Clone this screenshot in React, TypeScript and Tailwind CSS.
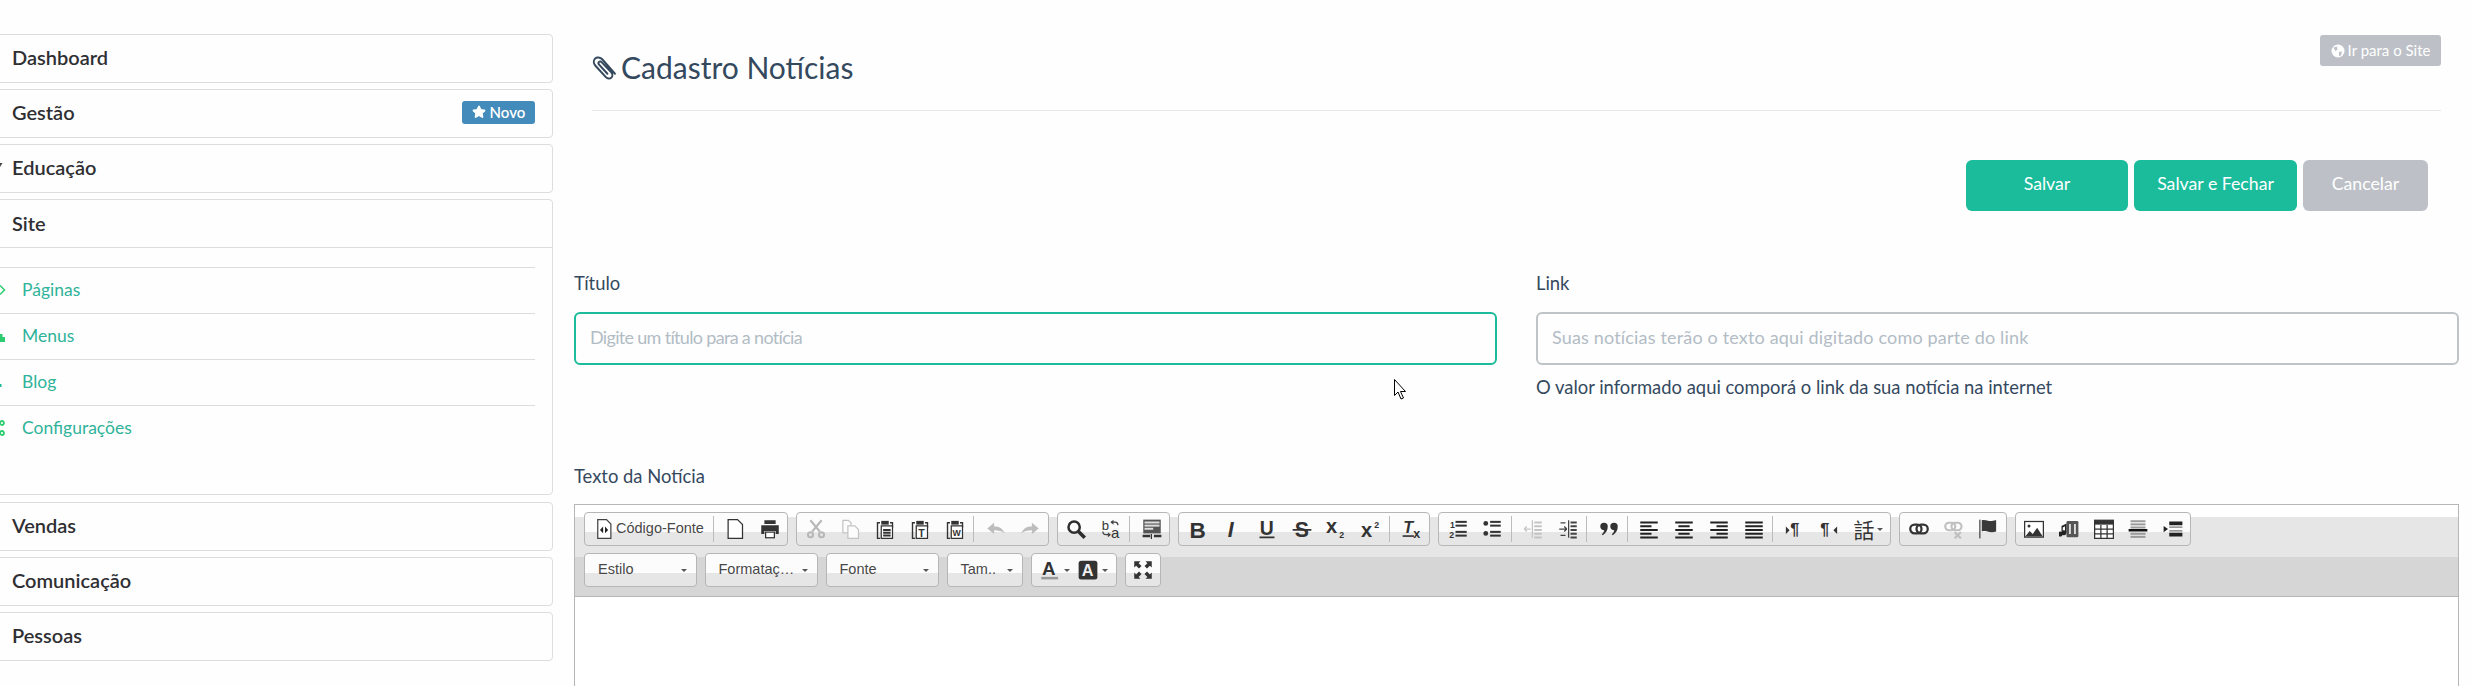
import type { ReactNode } from "react";
import { Star } from "lucide-react";

const serif = { fontFamily: "Liberation Sans, Arial, sans-serif" };

const bars = (rows: [number, number, number][], fill = "#222") =>
  rows.map(([x, y, w], i) => <rect key={i} x={x} y={y} width={w} height={1.6} fill={fill} />);

const letter = (t: string, x: number, y: number, size: number, extra: object = {}) => (
  <text x={x} y={y} fontSize={size} fill="#333" style={serif} fontWeight={700} {...extra}>
    {t}
  </text>
);

const clip = (inner: ReactNode) => (
  <>
    <path d="M4 3H2v12.5h2M12 3h2v4" fill="none" stroke="#333" strokeWidth="1.1" />
    <path d="M5 1.5h6v3H5z" fill="#333" />
    <rect x="5" y="5.5" width="9" height="10" fill="#fff" stroke="#333" />
    {inner}
  </>
);

const icons: Record<string, ReactNode> = {
  source: (
    <>
      <path d="M3 .5h7l3.500 3.500v11.500H3z" fill="#fff" stroke="#444" />
      <path d="M7.300 6 4.800 8.700l2.500 2.700zM8.800 6l2.500 2.700-2.500 2.700z" fill="#222" />
    </>
  ),
  newpage: <path d="M2.500.5H10l4 4v11H2.500z" fill="#fff" stroke="#333" />,
  print: (
    <>
      <path d="M3.500 1h9v3h-9zM1 5h14v7h-2.500V9.500h-9V12H1z" fill="#333" />
      <rect x="4.500" y="10.500" width="7" height="4.500" fill="#fff" stroke="#333" />
    </>
  ),
  cut: (
    <g stroke="#b8b8b8" fill="none" strokeWidth="1.700">
      <path d="M3.500 1l7.500 9M12.500 1 5 10" />
      <circle cx="3.600" cy="12.600" r="2" />
      <circle cx="12.400" cy="12.600" r="2" />
    </g>
  ),
  copy: (
    <g stroke="#c4c4c4" fill="#fcfcfc">
      <path d="M1.500 1H6l2 2v8H1.500z" />
      <path d="M5.500 5.500H11l3 3v7H5.500z" />
    </g>
  ),
  paste: clip(<g>{bars([[6.5, 8, 6], [6.5, 10.2, 6], [6.5, 12.4, 6]], "#333")}</g>),
  pastetext: clip(letter("T", 6.6, 14, 8.5)),
  pasteword: clip(letter("W", 5.9, 13.8, 7)),
  undo: <path d="M1 7.500 6.500 3v3c4 0 7 1.500 8.500 5.500C12.500 9.500 10 9 6.500 9v3z" fill="#bdbdbd" />,
  redo: <path d="M15 7.500 9.500 3v3C5.500 6 2.500 7.500 1 11.500 3.500 9.500 6 9 9.500 9v3z" fill="#bdbdbd" />,
  search: (
    <g stroke="#2e2e2e" fill="none" strokeWidth="2">
      <circle cx="6.500" cy="6.500" r="4.500" />
      <path d="m10 10 5 5" strokeWidth="2.800" />
    </g>
  ),
  replace: (
    <>
      {letter("b", 0.5, 8.5, 10.5, { fontWeight: 400 })}
      {letter("a", 8, 15.5, 12, { fontWeight: 400 })}
      <path d="M8 2.500h3.500c1 0 2 1 2 2.500M1.500 10c0 1.500 1 2.500 2.500 2.500h3" fill="none" stroke="#444" />
      <path d="m10 .5-2.500 2 2.500 2zM5.500 10.500l2.500 2-2.500 2z" fill="#444" />
    </>
  ),
  selectall: (
    <>
      <rect x="1" y="0.500" width="14" height="11" fill="#555" />
      {bars([[2, 2, 12], [2, 4.5, 12], [2, 7, 7]], "#ddd")}
      <path d="M1 13h5v1H1zM10 13h5v1h-5zM7.500 12v4" stroke="#333" fill="#333" strokeWidth="1" />
    </>
  ),
  bold: letter("B", 2, 15, 18),
  italic: letter("I", 4.5, 14.5, 17, { fontStyle: "italic" }),
  underline: (
    <>
      {letter("U", 2.2, 12.5, 15.5)}
      <rect x="2" y="14" width="12" height="1.400" fill="#333" />
    </>
  ),
  strike: (
    <>
      {letter("S", 2.2, 14.5, 17)}
      <rect x="0.500" y="8" width="15" height="1.400" fill="#333" />
    </>
  ),
  sub: (
    <>
      {letter("x", 0, 11.5, 16)}
      {letter("2", 10.5, 15.5, 7)}
    </>
  ),
  sup: (
    <>
      {letter("x", 0, 14, 16)}
      {letter("2", 10.5, 7, 7)}
    </>
  ),
  clear: (
    <>
      {letter("T", 1, 11.5, 13, { fontStyle: "italic" })}
      <rect x="0.500" y="13" width="9" height="1.300" fill="#333" />
      {letter("x", 9, 15.5, 10)}
    </>
  ),
  ol: (
    <>
      {letter("1", 1.5, 7, 7)}
      {letter("2", 1, 15, 7)}
      {bars([[6, 1.5, 9], [6, 4.5, 9], [6, 9.5, 9], [6, 12.5, 9]], "#333")}
    </>
  ),
  ul: (
    <>
      <circle cx="3" cy="3.500" r="1.900" fill="#333" />
      <circle cx="3" cy="11.500" r="1.900" fill="#333" />
      {bars([[6.5, 1.5, 8.5], [6.5, 4.5, 8.5], [6.5, 9.5, 8.5], [6.5, 12.5, 8.5]], "#333")}
    </>
  ),
  outdent: (
    <>
      <rect x="7" y="1" width="1" height="14" fill="#c4c4c4" />
      {bars([[9, 2, 6], [9, 5, 6], [9, 8, 6], [9, 11, 6], [9, 14, 6]], "#c4c4c4")}
      <path d="M1 8h5M1 8l2-2M1 8l2 2" stroke="#c4c4c4" fill="none" />
    </>
  ),
  indent: (
    <>
      <rect x="8" y="1" width="1" height="14" fill="#444" />
      {bars([[10, 2, 5], [10, 5, 5], [10, 8, 5], [10, 11, 5], [10, 14, 5]], "#444")}
      <path d="M1 8h6M7 8 5 6M7 8l-2 2M2 3h4M2 13h4" stroke="#444" fill="none" />
    </>
  ),
  quote: (
    <path
      d="M4 3a3 3 0 0 1 3 3c0 3-1.500 5.500-4 7l-.8-.8C3.500 11 4 10 4.200 9 2.500 9 1 7.700 1 6a3 3 0 0 1 3-3zM12 3a3 3 0 0 1 3 3c0 3-1.500 5.500-4 7l-.8-.8c1.300-1.200 1.800-2.200 2-3.200-1.700 0-3.200-1.300-3.200-3a3 3 0 0 1 3-3z"
      fill="#333"
    />
  ),
  left: <g>{bars([[1, 2, 14], [1, 5, 9], [1, 8, 14], [1, 11, 9], [1, 14, 14]])}</g>,
  center: <g>{bars([[1, 2, 14], [3.5, 5, 9], [1, 8, 14], [3.5, 11, 9], [1, 14, 14]])}</g>,
  right: <g>{bars([[1, 2, 14], [6, 5, 9], [1, 8, 14], [6, 11, 9], [1, 14, 14]])}</g>,
  justify: <g>{bars([[1, 2, 14], [1, 5, 14], [1, 8, 14], [1, 11, 14], [1, 14, 14]])}</g>,
  ltr: (
    <>
      <path d="M1.500 6v6l3-3z" fill="#333" />
      {letter("¶", 5, 13, 13)}
    </>
  ),
  rtl: (
    <>
      {letter("¶", 1, 13, 13)}
      <path d="M14.500 6v6l-3-3z" fill="#333" />
    </>
  ),
  link: (
    <g fill="none" stroke="#333" strokeWidth="1.800">
      <rect x="1" y="4.500" width="9" height="7" rx="3.500" />
      <rect x="6" y="4.500" width="9" height="7" rx="3.500" />
    </g>
  ),
  unlink: (
    <g fill="none" stroke="#c0c0c0" strokeWidth="1.700">
      <rect x="1" y="3" width="8" height="6" rx="3" />
      <rect x="6" y="3" width="8" height="6" rx="3" />
      <path d="m8.500 10.500 5 5M13.500 10.500l-5 5" />
    </g>
  ),
  flag: (
    <>
      <rect x="1" y="0.500" width="1" height="15" fill="#444" />
      <path d="M3 1c3-1 5 1 8 .5 1.500-.2 2.500-.5 3.500-.5v9c-3 1-5 .5-7 0-2-.5-3-.5-4.500 0z" fill="#3a3a3a" />
    </>
  ),
  image: (
    <>
      <rect x="0.500" y="2" width="15" height="12.500" fill="#fff" stroke="#333" />
      <circle cx="4" cy="5.500" r="1.200" fill="#333" />
      <path d="M1 14l3.500-4.500 2.500 2.500 3.500-5L15 14z" fill="#333" />
    </>
  ),
  flash: (
    <>
      <rect x="6" y="1.500" width="9.500" height="13" rx="1" fill="#555" />
      <path d="M8 4h1.500v8H8zM12 4h1.500v8H12z" fill="#ddd" />
      <path d="M2 5.500 6 3.500v7.500a2 2 0 1 1-1.200-1.800V5.800L3 6.700V12a2 2 0 1 1-1-1.700z" fill="#222" />
    </>
  ),
  table: (
    <>
      <rect x="0.500" y="1" width="15" height="14.500" fill="#fff" stroke="#333" />
      <rect x="0.500" y="1" width="15" height="3.500" fill="#333" />
      <path d="M5.500 4.500v11M10.500 4.500v11M.5 8h15M.5 11.800h15" stroke="#333" fill="none" />
    </>
  ),
  hr: (
    <>
      {bars([[2, 1, 12], [2, 3.5, 12], [2, 6, 12], [2, 11, 12], [2, 13.5, 12]], "#9a9a9a")}
      <rect x="0.500" y="8" width="15" height="2" fill="#111" />
    </>
  ),
  blocks: (
    <>
      <path d="M.5 5.500v5l3.500-2.500z" fill="#222" />
      <rect x="5" y="2" width="10.500" height="3" fill="#222" />
      <rect x="5" y="6" width="10.500" height="1" fill="#777" />
      <rect x="5" y="9" width="10.500" height="1" fill="#777" />
      <rect x="5" y="11" width="10.500" height="3" fill="#222" />
    </>
  ),
  textcolor: (
    <>
      {letter("A", 1.5, 12, 15)}
      <rect x="1" y="13.500" width="13.500" height="2" fill="#999" />
    </>
  ),
  bgcolor: (
    <>
      <rect x="0.500" y="0.500" width="15" height="15" rx="2" fill="#333" />
      {letter("A", 3, 13, 13, { fill: "#eee" })}
    </>
  ),
  maximize: (
    <path
      d="M1 1h5L4.500 2.500 6.800 4.800 4.800 6.800 2.500 4.500 1 6zM15 1v5l-1.500-1.500-2.300 2.300-2-2 2.300-2.300L10 1zM1 15v-5l1.500 1.500 2.300-2.300 2 2-2.300 2.300L6 15zM15 15h-5l1.500-1.500-2.300-2.300 2-2 2.300 2.300L15 10z"
      fill="#333"
    />
  ),
};

function Icon({ name }: { name: string }) {
  return (
    <svg width="20" height="20" viewBox="0 0 16 16" className="shrink-0">
      {icons[name]}
    </svg>
  );
}

const Arrow = () => <span className="h-0 w-0 border-x-[3px] border-t-[3px] border-x-transparent border-t-[#555]" />;

const Sep = () => (
  <span className="flex w-[6px] items-center pl-[1px]">
    <span className="h-[26px] w-px bg-[#bcbcbc]" />
  </span>
);

function Btn({ name }: { name: string }) {
  return name === "|" ? (
    <Sep />
  ) : (
    <span className="flex w-[34.75px] items-center justify-center">
      <Icon name={name} />
    </span>
  );
}

const groupClass =
  "flex h-[34px] rounded-[4px] border border-[#b6b6b6] bg-[linear-gradient(#fcfcfc_19px,#e6e6e6_19px)]";

const Combo = ({ label, w }: { label: string; w: string }) => (
  <div className={`${groupClass} ${w} items-center justify-between pl-[13px] pr-[9px] text-[14.5px] text-[#484848]`}>
    <span>{label}</span>
    <Arrow />
  </div>
);

function ButtonGroup({ names }: { names: string[] }) {
  return (
    <div className={`${groupClass} pl-px`}>
      {names.map((n, i) => (
        <Btn key={i} name={n} />
      ))}
    </div>
  );
}

function Toolbar() {
  return (
    <div className="flex flex-col gap-[7px] border-b border-[#b6b6b6] bg-[linear-gradient(#fff_12px,#e6e6e6_12px,#e6e6e6_52px,#d6d6d6_52px)] pb-[9px] pl-[9px] pt-[7px]">
      <div className="flex gap-[8px]">
        <div className={`${groupClass} pl-px`}>
          <span className="flex w-[125.9px] items-center gap-[2px] whitespace-nowrap pl-[8px] text-[14.5px] text-[#484848]">
            <Icon name="source" />
            Código-Fonte
          </span>
          <Sep />
          <Btn name="newpage" />
          <Btn name="print" />
        </div>
        <ButtonGroup names={["cut", "copy", "paste", "pastetext", "pasteword", "|", "undo", "redo"]} />
        <ButtonGroup names={["search", "replace", "|", "selectall"]} />
        <ButtonGroup names={["bold", "italic", "underline", "strike", "sub", "sup", "|", "clear"]} />
        <div className={`${groupClass} pl-px`}>
          {["ol", "ul", "|", "outdent", "indent", "|", "quote", "|", "left", "center", "right", "justify", "|", "ltr", "rtl"].map((n, i) => (
            <Btn key={i} name={n} />
          ))}
          <span className="flex w-[44px] items-center gap-[3px] pl-[7px] text-[21px] leading-none text-[#333] [font-family:'Noto_Sans_CJK_TC',sans-serif]">
            話
            <Arrow />
          </span>
        </div>
        <ButtonGroup names={["link", "unlink", "flag"]} />
        <ButtonGroup names={["image", "flash", "table", "hr", "blocks"]} />
      </div>
      <div className="flex gap-[8px]">
        <Combo label="Estilo" w="w-[112.5px]" />
        <Combo label="Formataç…" w="w-[113px]" />
        <Combo label="Fonte" w="w-[113px]" />
        <Combo label="Tam.." w="w-[76px]" />
        <div className={`${groupClass} w-[86px] items-center gap-[4px] pl-[8px]`}>
          <Icon name="textcolor" />
          <Arrow />
          <span className="ml-[4px]">
            <Icon name="bgcolor" />
          </span>
          <Arrow />
        </div>
        <div className={`${groupClass} w-[36.5px] items-center justify-center`}>
          <Icon name="maximize" />
        </div>
      </div>
    </div>
  );
}

function Panel({ title, badge }: { title: string; badge?: boolean }) {
  return (
    <div className="flex h-[49px] items-center justify-between rounded-[4px] border border-[#dddddd] pb-[3px] pl-[21px] pr-[17px] text-[20px] font-semibold text-[#2f2f33]">
      {title}
      {badge && (
        <span className="flex h-[23px] w-[73px] items-center justify-center gap-[4px] rounded-[3px] bg-[#428bba] text-[15px] font-semibold text-white">
          <Star className="h-[14px] w-[14px] fill-white" />
          Novo
        </span>
      )}
    </div>
  );
}

const subItems: { label: string; icon: ReactNode }[] = [
  {
    label: "Páginas",
    icon: <path d="M0 3.500 4.500 8 0 12.500" fill="none" stroke="#2ecc71" strokeWidth="1.500" />,
  },
  {
    label: "Menus",
    icon: (
      <>
        <path d="M0 9h5v5H0z" fill="#2ecc71" />
        <path d="M0 6h2.500v3H0z" fill="#2ecc71" />
      </>
    ),
  },
  { label: "Blog", icon: <path d="M0 10h1.500v3H0z" fill="#1abc9c" /> },
  {
    label: "Configurações",
    icon: (
      <g fill="none" stroke="#2ecc71" strokeWidth="1.800">
        <circle cx="2" cy="3" r="2" />
        <circle cx="2" cy="13" r="2" />
      </g>
    ),
  },
];

export default function App() {
  return (
    <div className="relative flex h-screen overflow-hidden bg-[#fefefe] text-[#34495e] [font-family:Lato,sans-serif]">
      {/* Sidebar starts past the left edge of the window */}
      <aside className="-ml-[10px] flex w-[563px] shrink-0 flex-col gap-[6px] pt-[34px]">
        <Panel title="Dashboard" />
        <Panel title="Gestão" badge />
        <div className="relative">
          <Panel title="Educação" />
          <svg className="absolute left-[10px] top-[18px]" width="4" height="12" viewBox="0 0 4 12">
            <path d="M0 1h2.500L0 5z" fill="#444" />
          </svg>
        </div>
        <div className="h-[296px] rounded-[4px] border border-[#dddddd]">
          <div className="flex h-[48px] items-center border-b border-[#dddddd] pb-[2px] pl-[21px] text-[20px] font-semibold text-[#2f2f33]">
            Site
          </div>
          <ul className="mr-[17px] mt-[19px]">
            {subItems.map((s) => (
              <li
                key={s.label}
                className="flex h-[46px] items-center gap-[16px] border-t border-[#dddddd] pb-[1px] pl-[9px] text-[17.5px] text-[#2fb39a]"
              >
                <svg width="6" height="16" viewBox="0 0 6 16" className="shrink-0">
                  {s.icon}
                </svg>
                {s.label}
              </li>
            ))}
          </ul>
        </div>
        <div className="mt-px flex flex-col gap-[6px]">
          <Panel title="Vendas" />
          <Panel title="Comunicação" />
          <Panel title="Pessoas" />
        </div>
      </aside>

      <main className="flex min-w-0 flex-1 flex-col pl-[21px] pr-[14px]">
        <header className="mx-[18px] flex h-[111px] shrink-0 items-start justify-between border-b border-[#e7eaec] pt-[35px]">
          <h1 className="-mt-[1px] flex h-[64px] items-center gap-[4px] pt-[1px] text-[30px] leading-[64px]">
            <svg width="25" height="26" viewBox="0 0 24 24" fill="none" stroke="#34495e" strokeWidth="1.900" strokeLinecap="round" strokeLinejoin="round">
              <path d="M22 18.500 10 4.800C8 2.500 4.500 2.300 2.900 4 1.200 5.800 1.400 8.700 3.300 10.800l10 11c1.500 1.600 3.900 1.800 5.300.4 1.400-1.400 1.200-3.800-.3-5.400L9.200 7.300c-.7-.8-1.800-.9-2.500-.2-.7.7-.6 1.800.1 2.600l8 8.800" />
            </svg>
            Cadastro Notícias
          </h1>
          <a className="flex h-[31px] w-[121px] items-center justify-center gap-[3px] rounded-[3px] bg-[#bdc1c7] text-[15px] text-white">
            <svg width="14" height="14" viewBox="0 0 14 14">
              <circle cx="7" cy="7" r="6.500" fill="#fff" />
              <path d="M2.500 3.500 6 2.500l.5 3-2 1.500zM8 8l3-.5-1 4-2 .5z" fill="#bdc1c7" />
            </svg>
            Ir para o Site
          </a>
        </header>

        <div className="mr-[31px] mt-[49px] flex shrink-0 justify-end gap-[6px] text-[17.7px] text-white">
          <button className="h-[51px] w-[162px] rounded-[6px] bg-[#1abc9c] pb-[2px]">Salvar</button>
          <button className="h-[51px] w-[163px] rounded-[6px] bg-[#1abc9c] pb-[2px]">Salvar e Fechar</button>
          <button className="h-[51px] w-[125px] rounded-[6px] bg-[#bdc1c7] pb-[2px]">Cancelar</button>
        </div>

        <div className="mt-[60px] grid shrink-0 grid-cols-2 gap-[39px] text-[18.4px]">
          <div>
            <label className="mb-[17px] block leading-[24px]">Título</label>
            <input
              placeholder="Digite um título para a notícia"
              className="h-[53px] w-full rounded-[6px] border-2 border-[#1abc9c] bg-transparent px-[14px] pb-[3px] text-[18px] tracking-[-0.68px] outline-none placeholder:text-[#b2bcc5]"
            />
          </div>
          <div>
            <label className="mb-[17px] block leading-[24px]">Link</label>
            <input
              placeholder="Suas notícias terão o texto aqui digitado como parte do link"
              className="h-[53px] w-full rounded-[6px] border-2 border-[#bdc3c7] bg-transparent px-[14px] pb-[3px] text-[18px] tracking-[0.17px] outline-none placeholder:text-[#b2bcc5]"
            />
            <p className="mt-[10px] leading-[24px]">O valor informado aqui comporá o link da sua notícia na internet</p>
          </div>
        </div>

        <label className="mb-[16px] mt-[65px] block shrink-0 text-[18.4px] leading-[24px]">Texto da Notícia</label>
        <div className="h-[400px] shrink-0 border border-[#b6b6b6] bg-white [font-family:'Liberation_Sans',Arial,sans-serif]">
          <Toolbar />
        </div>
      </main>

      {/* mouse pointer caught in the screenshot */}
      <svg className="absolute left-[1394px] top-[379px]" width="14" height="22" viewBox="0 0 14 22">
        <path d="M.5.5v16l3.500-3.500 3 7 2.500-1-3-6.500h5z" fill="#fff" stroke="#000" />
      </svg>
    </div>
  );
}
